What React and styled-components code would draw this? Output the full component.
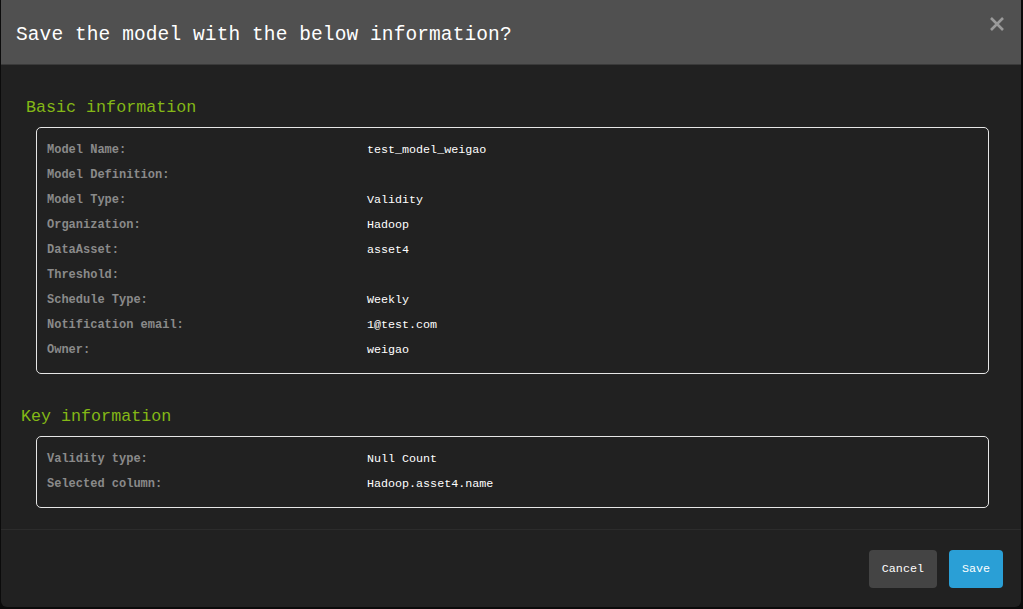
import React from 'react';
import styled, { createGlobalStyle } from 'styled-components';

const GlobalStyle = createGlobalStyle`
  html, body {
    margin: 0;
    padding: 0;
    background: #0b0b0b;
    font-family: 'Liberation Mono', 'DejaVu Sans Mono', monospace;
  }
`;

const Page = styled.div`
  width: 1023px;
  height: 609px;
  overflow: hidden;
  padding-left: 1px;
  box-sizing: border-box;
`;

const Dialog = styled.div`
  width: 1020px;
  height: 607px;
  background: #212121;
  border-radius: 0 0 6px 6px;
  display: flex;
  flex-direction: column;
  overflow: hidden;
`;

const Header = styled.div`
  height: 64px;
  flex: none;
  background: #505050;
  border-bottom: 1px solid #3a3a3a;
  display: flex;
  align-items: center;
  justify-content: space-between;
  padding: 0 16px 0 15px;
`;

const Title = styled.h4`
  margin: 5px 0 0;
  font-size: 19.5px;
  font-weight: normal;
  color: #ffffff;
  letter-spacing: 0.1px;
`;

const Close = styled.button`
  border: 0;
  background: none;
  padding: 0;
  margin-top: -16px;
  cursor: pointer;
  display: flex;
`;

const Body = styled.div`
  flex: 1;
  padding: 0 32px 0 35px;
`;

const SectionTitle = styled.h5`
  margin: 33px 0 9px ${props => props.indent}px;
  font-size: 16.7px;
  line-height: 20px;
  font-weight: normal;
  color: #84b816;
`;

const Box = styled.div`
  border: 1px solid #e6e6e6;
  border-radius: 5px;
  padding: 9px 10px 11px;
`;

const Row = styled.div`
  display: flex;
  height: 25px;
  align-items: center;
`;

const Label = styled.div`
  width: 320px;
  flex: none;
  font-size: 12px;
  font-weight: bold;
  color: #8a8a8a;
`;

const Value = styled.div`
  font-size: 11.7px;
  color: #ffffff;
`;

const Footer = styled.div`
  flex: none;
  border-top: 1px solid #2c2c2c;
  padding: 20px 18px 19px 0;
  display: flex;
  justify-content: flex-end;
  gap: 12px;
`;

const Button = styled.button`
  height: 38px;
  border: 0;
  border-radius: 4px;
  padding: 0 ${props => props.primary ? 13 : 13}px;
  font-family: 'Liberation Mono', monospace;
  font-size: 11.7px;
  font-weight: normal;
  color: #ffffff;
  background: ${props => props.primary ? '#2a9fd6' : '#444444'};
`;

const basic = [
  ['Model Name:', 'test_model_weigao'],
  ['Model Definition:', ''],
  ['Model Type:', 'Validity'],
  ['Organization:', 'Hadoop'],
  ['DataAsset:', 'asset4'],
  ['Threshold:', ''],
  ['Schedule Type:', 'Weekly'],
  ['Notification email:', '1@test.com'],
  ['Owner:', 'weigao'],
];

const keyInfo = [
  ['Validity type:', 'Null Count'],
  ['Selected column:', 'Hadoop.asset4.name'],
];

const InfoBox = ({ rows }) => (
  <Box>
    {rows.map(([label, value]) => (
      <Row key={label}>
        <Label>{label}</Label>
        <Value>{value}</Value>
      </Row>
    ))}
  </Box>
);

export default function App() {
  return (
    <Page>
      <GlobalStyle />
      <Dialog>
        <Header>
          <Title>Save the model with the below information?</Title>
          <Close aria-label="close">
            <svg width="16" height="16" viewBox="0 0 16 16">
              <path d="M2 2 L14 14 M14 2 L2 14" stroke="#9a9a9a" strokeWidth="2.6" />
            </svg>
          </Close>
        </Header>
        <Body>
          <SectionTitle indent={-10}>Basic information</SectionTitle>
          <InfoBox rows={basic} />
          <SectionTitle indent={-15}>Key information</SectionTitle>
          <InfoBox rows={keyInfo} />
        </Body>
        <Footer>
          <Button>Cancel</Button>
          <Button primary>Save</Button>
        </Footer>
      </Dialog>
    </Page>
  );
}
